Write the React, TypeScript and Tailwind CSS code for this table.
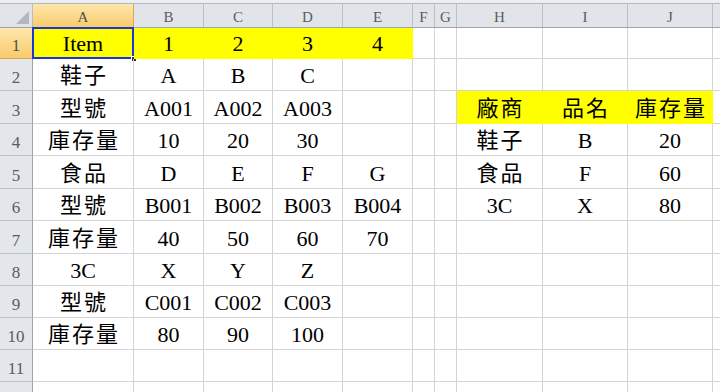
import React from "react";

const cols = ["A", "B", "C", "D", "E", "F", "G", "H", "I", "J", ""];
const tpl =
  "grid grid-cols-[33px_101px_70px_69px_70px_70px_22px_22px_86px_85px_85px_1fr]";

type Row = { n: string; h: string; cells: string[]; yellow?: [number, number] };

const rows: Row[] = [
  { n: "1", h: "h-[31px]", cells: ["Item", "1", "2", "3", "4"], yellow: [0, 4] },
  { n: "2", h: "h-[32px]", cells: ["鞋子", "A", "B", "C"] },
  {
    n: "3",
    h: "h-[33px]",
    cells: ["型號", "A001", "A002", "A003", "", "", "", "廠商", "品名", "庫存量"],
    yellow: [7, 9],
  },
  { n: "4", h: "h-[32px]", cells: ["庫存量", "10", "20", "30", "", "", "", "鞋子", "B", "20"] },
  { n: "5", h: "h-[33px]", cells: ["食品", "D", "E", "F", "G", "", "", "食品", "F", "60"] },
  { n: "6", h: "h-[32px]", cells: ["型號", "B001", "B002", "B003", "B004", "", "", "3C", "X", "80"] },
  { n: "7", h: "h-[33px]", cells: ["庫存量", "40", "50", "60", "70"] },
  { n: "8", h: "h-[32px]", cells: ["3C", "X", "Y", "Z"] },
  { n: "9", h: "h-[32px]", cells: ["型號", "C001", "C002", "C003"] },
  { n: "10", h: "h-[32px]", cells: ["庫存量", "80", "90", "100"] },
  { n: "11", h: "h-[32px]", cells: [] },
  // row 12 only peeks in at the bottom edge
  { n: "", h: "h-[32px]", cells: [] },
];

const cjk = /[\u4e00-\u9fff]/;

function Cell({ text, yellow, last, selected }: { text: string; yellow: boolean; last: boolean; selected: boolean }) {
  let cls = "relative flex items-end justify-center pb-[3px] border-b text-[22px] leading-none text-black ";
  cls += yellow ? "bg-[#ffff00] border-b-[#ffff00] " : "border-b-[#d4d4d4] ";
  if (!last) cls += yellow ? "border-r border-r-[#ffff00] " : "border-r border-r-[#d4d4d4] ";
  if (cjk.test(text)) cls += "tracking-[2px] pl-[2px] ";
  return (
    <div className={cls}>
      {text}
      {selected && (
        <>
          <div className="absolute -top-px -left-px -right-px -bottom-px border-2 border-[#1d36d8]" />
          <div className="absolute -right-[4px] -bottom-[4px] w-[6px] h-[6px] bg-[#2a2f45] border border-white" />
        </>
      )}
    </div>
  );
}

export default function App() {
  return (
    <div className="w-[720px] h-[392px] overflow-hidden bg-white font-['Liberation_Serif','Noto_Sans_CJK_TC',serif]">
      <div className="h-[4px] bg-[#eceef1] border-b border-[#b3b7bd]" />
      <div className={`${tpl} h-[24px] bg-[#e1e4e9] border-b border-[#9ea4ac]`}>
        <div className="relative border-r border-[#b9bec5]">
          <div className="absolute right-[3px] bottom-[3px] w-0 h-0 border-l-[13px] border-l-transparent border-b-[13px] border-b-[#b3b7be]" />
        </div>
        {cols.map((c, i) => (
          <div
            key={i}
            className={
              i === 0
                ? "flex items-end justify-center pb-[2px] text-[15px] leading-none text-[#505050] bg-linear-to-b from-[#fde7ab] to-[#f8cb6c] border-r border-[#d9a94e]"
                : i === cols.length - 1
                ? ""
                : "flex items-end justify-center pb-[2px] text-[15px] leading-none text-[#5c5c5c] border-r border-[#bcc1c8]"
            }
          >
            {c}
          </div>
        ))}
      </div>
      {rows.map((r, ri) => (
        <div key={ri} className={`${tpl} ${r.h}`}>
          <div
            className={
              ri === 0
                ? "flex items-end justify-center pb-[4px] text-[17px] leading-none text-[#505050] bg-linear-to-b from-[#fde7ab] to-[#f8cb6c] border-r border-b border-r-[#9ea4ac] border-b-[#d9a94e]"
                : "flex items-end justify-center pb-[4px] text-[17px] leading-none text-[#5c5c5c] bg-[#e3e6eb] border-r border-b border-r-[#9ea4ac] border-b-[#bcc1c8]"
            }
          >
            {r.n}
          </div>
          {cols.map((_, ci) => {
            const y = !!r.yellow && ci >= r.yellow[0] && ci <= r.yellow[1];
            return (
              <Cell
                key={ci}
                text={r.cells[ci] ?? ""}
                yellow={y}
                last={ci === cols.length - 1}
                selected={ri === 0 && ci === 0}
              />
            );
          })}
        </div>
      ))}
    </div>
  );
}
